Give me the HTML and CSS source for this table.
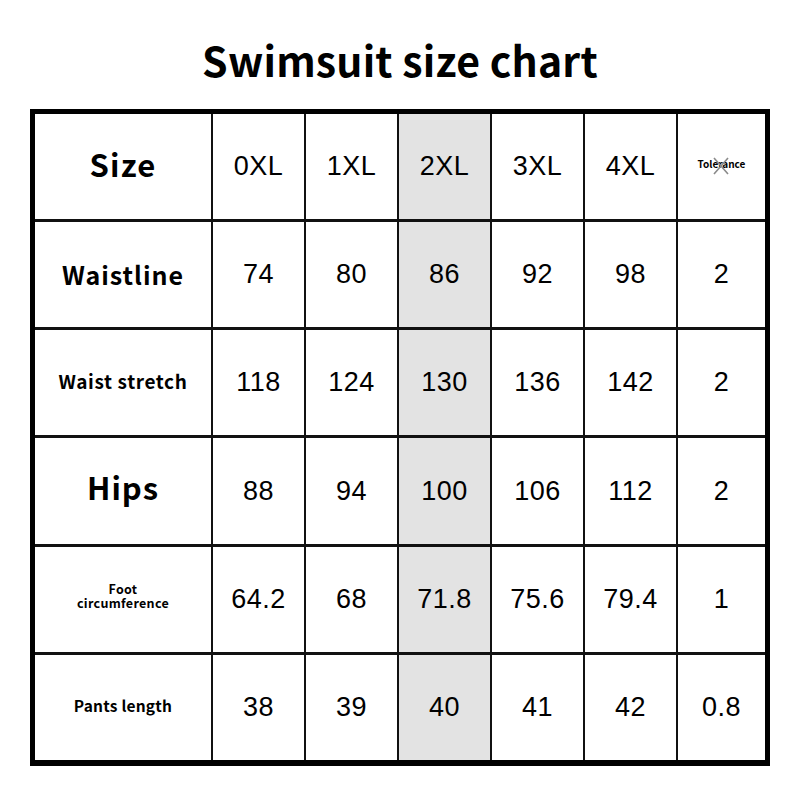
FILE: index.html
```html
<!DOCTYPE html>
<html>
<head>
<meta charset="utf-8">
<link rel="stylesheet" href="styles.css">
</head>
<body>
<div class="page">
  <h1 class="title">Swimsuit size chart</h1>
  <div class="chart">
    <div class="cell label l-size">Size</div>
    <div class="cell num">0XL</div>
    <div class="cell num">1XL</div>
    <div class="cell num hl">2XL</div>
    <div class="cell num">3XL</div>
    <div class="cell num">4XL</div>
    <div class="cell tol"><span class="tol-text">Tolerance<svg class="tol-x" width="16" height="18" viewBox="0 0 16 18"><path d="M1 1 L15 17 M15 1 L1 17" stroke="#8a8a8a" stroke-width="1.6" fill="none"/></svg></span></div>

    <div class="cell label l-waist">Waistline</div>
    <div class="cell num">74</div>
    <div class="cell num">80</div>
    <div class="cell num hl">86</div>
    <div class="cell num">92</div>
    <div class="cell num">98</div>
    <div class="cell num">2</div>

    <div class="cell label l-stretch">Waist stretch</div>
    <div class="cell num">118</div>
    <div class="cell num">124</div>
    <div class="cell num hl">130</div>
    <div class="cell num">136</div>
    <div class="cell num">142</div>
    <div class="cell num">2</div>

    <div class="cell label l-hips">Hips</div>
    <div class="cell num">88</div>
    <div class="cell num">94</div>
    <div class="cell num hl">100</div>
    <div class="cell num">106</div>
    <div class="cell num">112</div>
    <div class="cell num">2</div>

    <div class="cell label l-foot"><span class="foot-line">Foot</span><span class="foot-line">circumference</span></div>
    <div class="cell num">64.2</div>
    <div class="cell num">68</div>
    <div class="cell num hl">71.8</div>
    <div class="cell num">75.6</div>
    <div class="cell num">79.4</div>
    <div class="cell num">1</div>

    <div class="cell label l-pants">Pants length</div>
    <div class="cell num">38</div>
    <div class="cell num">39</div>
    <div class="cell num hl">40</div>
    <div class="cell num">41</div>
    <div class="cell num">42</div>
    <div class="cell num">0.8</div>
  </div>
</div>
</body>
</html>
```

FILE: styles.css
```css
html, body {
  margin: 0;
  padding: 0;
  background: #fff;
}

.page {
  width: 800px;
  height: 800px;
  padding: 0 30px;
  box-sizing: border-box;
}

.title {
  margin: 0;
  height: 109px;
  box-sizing: border-box;
  padding-top: 34px;
  text-align: center;
  font-family: "Noto Sans CJK SC", "Noto Sans", sans-serif;
  font-weight: 700;
  font-size: 41px;
  letter-spacing: 0.2px;
  line-height: 50px;
  color: #000;
}

.chart {
  display: grid;
  grid-template-columns: 176px repeat(5, 91px) 87px;
  grid-template-rows: repeat(6, 1fr);
  column-gap: 2px;
  row-gap: 3px;
  width: 740px;
  height: 657px;
  box-sizing: border-box;
  border: 5px solid #000;
  border-bottom-width: 6px;
  background: #111;
}

.cell {
  background: #fff;
  display: flex;
  align-items: center;
  justify-content: center;
  text-align: center;
  color: #000;
}

.cell.hl {
  background: #e3e3e3;
}

.label {
  font-family: "Noto Sans CJK SC", "Noto Sans", sans-serif;
  font-weight: 700;
  line-height: 1.15;
}

.l-size { font-size: 31px; letter-spacing: 1.2px; padding-bottom: 6px; }
.l-waist { font-size: 25px; letter-spacing: 1px; }
.l-stretch { font-size: 19px; letter-spacing: 0.6px; padding-bottom: 4px; }
.l-hips { font-size: 31px; letter-spacing: 1px; padding-bottom: 8px; }

.l-foot {
  flex-direction: column;
  font-size: 12.5px;
  letter-spacing: 0.3px;
  padding-bottom: 6px;
}

.foot-line {
  display: block;
  height: 14px;
  line-height: 14px;
}

.l-pants { font-size: 15.5px; letter-spacing: 0.2px; padding-bottom: 4px; }

.num {
  font-family: "Liberation Sans", Arial, sans-serif;
  font-size: 27px;
  letter-spacing: 0.5px;
}

.tol {
  padding-bottom: 6px;
}

.tol-text {
  position: relative;
  font-family: "Noto Sans CJK SC", "Noto Sans", sans-serif;
  font-weight: 700;
  font-size: 10px;
  line-height: 12px;
}

.tol-x {
  position: absolute;
  left: 50%;
  top: 50%;
  margin-left: -8px;
  margin-top: -7px;
}
```
